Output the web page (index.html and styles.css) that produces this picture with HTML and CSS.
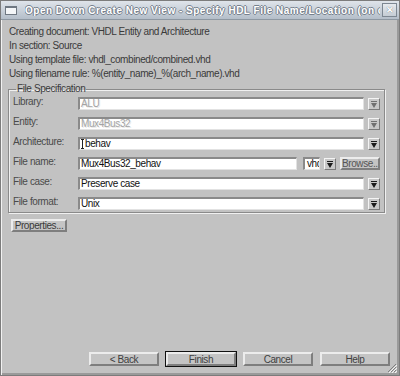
FILE: index.html
```html
<!DOCTYPE html>
<html lang="en">

<head>
    <meta charset="UTF-8">
    <title>Specify HDL File Name/Location</title>
    <link rel="stylesheet" href="styles.css">
</head>

<body>
    <div class="window">
        <div class="titlebar">
            <span class="win-icon"></span>
            <span class="title">Open Down Create New View - Specify HDL File Name/Location (on c</span>
            <span class="close">&#x2715;</span>
        </div>
        <div class="content">
            <div class="info">
                <p>Creating document: VHDL Entity and Architecture</p>
                <p>In section: Source</p>
                <p>Using template file: vhdl_combined/combined.vhd</p>
                <p>Using filename rule: %(entity_name)_%(arch_name).vhd</p>
            </div>

            <fieldset class="spec">
                <legend>File Specification</legend>
                <div class="row">
                    <label>Library:</label>
                    <div class="field disabled">ALU</div>
                    <span class="drop off"></span>
                </div>
                <div class="row">
                    <label>Entity:</label>
                    <div class="field disabled">Mux4Bus32</div>
                    <span class="drop off"></span>
                </div>
                <div class="row">
                    <label>Architecture:</label>
                    <div class="field"><span class="caret"></span>behav</div>
                    <span class="drop"></span>
                </div>
                <div class="row">
                    <label>File name:</label>
                    <div class="field">Mux4Bus32_behav</div>
                    <div class="field ext">vhd</div>
                    <span class="drop"></span>
                    <button class="btn browse" type="button">Browse...</button>
                </div>
                <div class="row">
                    <label>File case:</label>
                    <div class="field">Preserve case</div>
                    <span class="drop"></span>
                </div>
                <div class="row">
                    <label>File format:</label>
                    <div class="field">Unix</div>
                    <span class="drop"></span>
                </div>
            </fieldset>

            <button class="btn props" type="button">Properties...</button>

            <div class="actions">
                <button class="btn" type="button">&lt; Back</button>
                <button class="btn default" type="button">Finish</button>
                <button class="btn" type="button">Cancel</button>
                <button class="btn" type="button">Help</button>
            </div>
        </div>
        <svg class="grip" width="10" height="10" viewBox="0 0 10 10">
            <path d="M9 1 L1 9 M9 4 L4 9 M9 7 L7 9" stroke="#808080" stroke-width="1" />
            <path d="M10 2 L2 10 M10 5 L5 10 M10 8 L8 10" stroke="#f4f4f4" stroke-width="1" />
        </svg>
    </div>
</body>

</html>
```

FILE: styles.css
```css
* {
    margin: 0;
    padding: 0;
    box-sizing: border-box;
    font-family: "Liberation Sans", Arial, sans-serif;
    font-size: 10px;
    letter-spacing: -0.4px;
}

body {
    width: 400px;
    height: 376px;
    background-color: #c2c2c2;
    overflow: hidden;
}

.window {
    position: relative;
    width: 400px;
    height: 376px;
    border: 1px solid #7c7c7c;
    box-shadow: inset 1px 1px 0 #f2f2f2, inset -2px -2px 0 #9a9a9a;
    background-color: #c2c2c2;
    display: flex;
    flex-direction: column;
}

.titlebar {
    height: 19px;
    display: flex;
    align-items: center;
    background: linear-gradient(#dfe4ea, #b4bec9);
    border-bottom: 1px solid #8e98a2;
    padding: 0 2px 0 4px;
}

.win-icon {
    width: 12px;
    height: 9px;
    border: 1px solid #6f7882;
    border-top-width: 2px;
    background-color: #f4f6f8;
    flex-shrink: 0;
}

.title {
    flex: 1;
    margin-left: 8px;
    font-size: 10px;
    font-weight: bold;
    letter-spacing: 0.5px;
    color: #ffffff;
    text-shadow: 1px 0 0 #76808c, -1px 0 0 #76808c, 0 1px 0 #76808c, 0 -1px 0 #76808c;
    white-space: nowrap;
    overflow: hidden;
}

.close {
    width: 15px;
    height: 14px;
    border: 1px solid #7d8792;
    background: linear-gradient(#e6eaee, #c4ccd4);
    color: #ffffff;
    text-shadow: 0 0 1px #55606a;
    font-size: 9px;
    font-weight: bold;
    letter-spacing: 0;
    display: flex;
    justify-content: center;
    align-items: center;
    margin-left: 2px;
    flex-shrink: 0;
}

.content {
    flex: 1;
    display: flex;
    flex-direction: column;
    padding: 5px 0 9px 7px;
}

.info {
    padding-left: 1px;
    color: #3a3a3a;
}

.info p {
    line-height: 14px;
}

.spec {
    width: 377px;
    margin-top: 1px;
    border: 1px solid #8a8a8a;
    box-shadow: inset 1px 1px 0 #f0f0f0, 1px 1px 0 #f0f0f0;
    padding: 1px 4px 2px 4px;
    display: flex;
    flex-direction: column;
    gap: 7px;
}

.spec legend {
    margin-left: 3px;
    padding: 0 1px;
    line-height: 14px;
    color: #3a3a3a;
}

.row {
    display: flex;
    align-items: center;
    height: 13px;
}

.row label {
    width: 65px;
    flex-shrink: 0;
    color: #4a4a4a;
    margin-top: -4px;
}

.field {
    flex: 1;
    height: 13px;
    background-color: #ffffff;
    border-top: 2px solid #8a8a8a;
    border-left: 2px solid #8a8a8a;
    border-bottom: 1px solid #e2e2e2;
    border-right: 1px solid #e2e2e2;
    line-height: 10px;
    padding-left: 1px;
    color: #111111;
    white-space: nowrap;
    overflow: hidden;
}

.field.disabled {
    color: #a4a4a4;
    text-shadow: 1px 1px 0 #e8e8e8;
}

.field.ext {
    flex: 0 0 17px;
    margin-left: 6px;
    padding-left: 2px;
}

.caret {
    display: inline-block;
    vertical-align: top;
    width: 3px;
    height: 10px;
    border: 1px solid #222222;
    border-left: none;
    border-right: none;
    background: linear-gradient(#222222, #222222) center / 1px 100% no-repeat;
    margin-right: 1px;
}

.drop {
    flex: 0 0 12px;
    height: 12px;
    margin-left: 4px;
    border-top: 1px solid #f4f4f4;
    border-left: 1px solid #f4f4f4;
    border-bottom: 1px solid #7a7a7a;
    border-right: 1px solid #7a7a7a;
    background-color: #c8c8c8;
    position: relative;
}

.drop::before {
    content: "";
    position: absolute;
    left: 2px;
    top: 2px;
    width: 6px;
    height: 1px;
    background-color: #1a1a1a;
}

.drop::after {
    content: "";
    position: absolute;
    left: 2px;
    top: 4px;
    border-left: 3px solid transparent;
    border-right: 3px solid transparent;
    border-top: 5px solid #1a1a1a;
}

.drop.off::before {
    background-color: #707070;
}

.drop.off::after {
    border-top-color: #707070;
}

.btn {
    height: 14px;
    border-top: 2px solid #ececec;
    border-left: 2px solid #ececec;
    border-bottom: 2px solid #7e7e7e;
    border-right: 2px solid #7e7e7e;
    background-color: #c4c4c4;
    line-height: 9px;
    color: #404040;
    cursor: pointer;
    white-space: nowrap;
    overflow: hidden;
}

.browse {
    width: 40px;
    height: 13px;
    margin-left: 4px;
    padding: 0;
    color: #555555;
}

.props {
    width: 56px;
    height: 13px;
    margin-top: 6px;
    margin-left: 3px;
    padding: 0;
    color: #3a3a3a;
}

.actions {
    margin-top: auto;
    display: flex;
    gap: 7px;
    padding-left: 81px;
}

.actions .btn {
    width: 70px;
}

.actions .default {
    outline: 1px solid #111111;
}

.grip {
    position: absolute;
    right: 2px;
    bottom: 2px;
}
```
